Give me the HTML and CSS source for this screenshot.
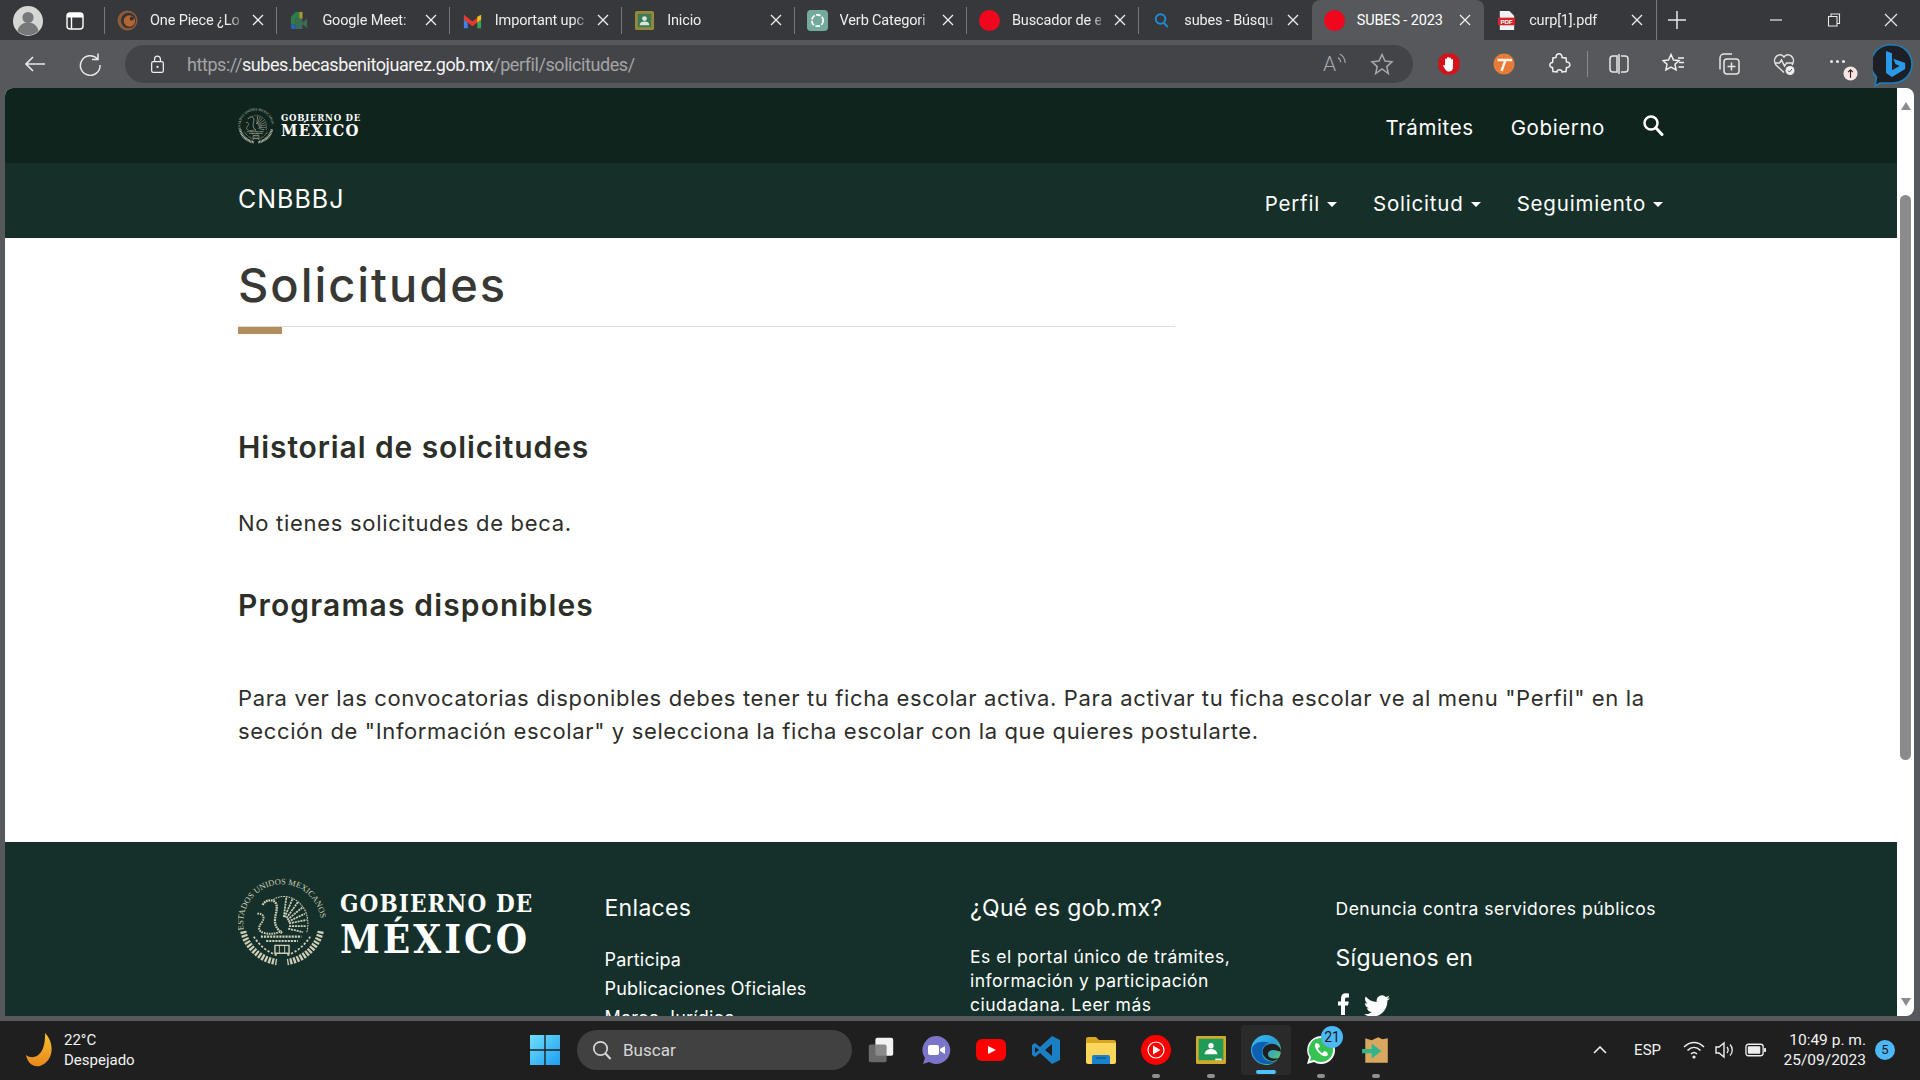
FILE: index.html
```html
<!DOCTYPE html>
<html lang="es">
<head>
<meta charset="utf-8">
<title>SUBES - 2023</title>
<link rel="stylesheet" href="styles.css">
</head>
<body>
<svg class="defs" width="0" height="0" aria-hidden="true">
  <defs>
    <symbol id="seal" viewBox="0 0 100 100">
      <path id="sealArc" d="M7 60A44 44 0 1 1 93 60" fill="none"/>
      <text class="seal-text"><textPath href="#sealArc" startOffset="1%">ESTADOS UNIDOS MEXICANOS</textPath></text>
      <g fill="none" stroke="currentColor">
        <path d="M52 44L55 21M53 44L62 23M55 45L68 27M56 47L73 33M57 49L76 40M58 51L78 47M58 54L77 54M57 57L74 61" stroke-width="2" stroke-dasharray="2.400 .9"/>
        <path d="M40 24C52 16 70 22 77 38c3 8 3 16 1 24" stroke-width="1.200" stroke-dasharray="2 1"/>
        <path d="M28 30c3-6 12-7 15-2 3 6-1 12-1 20 0 6 3 10 8 14" stroke-width="2.600" stroke-dasharray="2 .8"/>
        <path d="M22 40c7-1 9 5 5 10s-5 10 3 12 14 0 20-2" stroke-width="2.200" stroke-dasharray="1.800 1"/>
        <path d="M26 66h46M32 71h36" stroke-width="2.400" stroke-dasharray="2.400 1.100"/>
        <path d="M42 76h16v9H42Z" stroke-width="1.600"/>
        <path d="M47 76v9M53 76v9" stroke-width="1"/>
        <path d="M6 60C9 76 24 92 44 95M94 60C91 76 76 92 56 95" stroke-width="7" stroke-dasharray="2.600 1.500"/>
        <path d="M18 66c6 10 16 18 26 21M82 66c-6 10-16 18-26 21" stroke-width="2" stroke-dasharray="2.500 2"/>
      </g>
    </symbol>
    <symbol id="x" viewBox="0 0 14 14"><path d="M2 2l10 10M12 2L2 12" stroke="currentColor" stroke-width="1.300" fill="none"/></symbol>
    <symbol id="red" viewBox="0 0 20 20"><circle cx="10" cy="10" r="10" fill="#f0061d"/></symbol>
  </defs>
</svg>

<div class="window">
  <header class="tabbar">
    <div class="tabbar-lead">
      <svg class="avatar" viewBox="0 0 30 30"><circle cx="15" cy="15" r="15" fill="#d6d6d4"/><circle cx="15" cy="11.500" r="5.600" fill="#77787a"/><path d="M4.500 25c1-6 6-8.500 10.500-8.500S24.500 19 25.500 25A15 15 0 0 1 4.500 25Z" fill="#77787a"/></svg>
      <svg class="tabs-icon" viewBox="0 0 18 18"><rect x="1" y="1" width="16" height="16" rx="3" fill="none" stroke="#fff" stroke-width="1.400"/><path d="M1 5.500h16V4a3 3 0 0 0-3-3H4a3 3 0 0 0-3 3Z" fill="#fff"/><path d="M5.500 5v12" stroke="#fff" stroke-width="1.400"/></svg>
    </div>
    <div class="tab">
      <svg class="fav" viewBox="0 0 22 22"><circle cx="11" cy="11" r="10.500" fill="#8f5a36"/><circle cx="12" cy="11" r="8" fill="#33343a"/><circle cx="13" cy="11.500" r="6" fill="#b5652e"/><circle cx="15.500" cy="9" r="2.200" fill="#33343a"/></svg>
      <span class="tab-label">One Piece ¿Lo</span><svg class="tab-x"><use href="#x"/></svg>
    </div>
    <div class="tab">
      <svg class="fav" viewBox="0 0 22 22"><path d="M2 7l5-5h7v7H7v6H2Z" fill="#2f7d46"/><path d="M2 15h5v5H4a2 2 0 0 1-2-2Z" fill="#2a62b8"/><path d="M7 9h7v4l5-4v10l-5-4v5H7Z" fill="#3a6d57"/><path d="M14 2v7h-3V2Z" fill="#b8962c"/></svg>
      <span class="tab-label">Google Meet:</span><svg class="tab-x"><use href="#x"/></svg>
    </div>
    <div class="tab">
      <svg class="fav" viewBox="0 0 22 22"><path d="M2 5v14h4V10Z" fill="#3f7fe6"/><path d="M20 5v14h-4V10Z" fill="#36a35a"/><path d="M2 5l9 7 9-7v5l-9 7-9-7Z" fill="#e5392d"/><path d="M16 7l4-2v5l-4 3Z" fill="#f3bb1b"/></svg>
      <span class="tab-label">Important upc</span><svg class="tab-x"><use href="#x"/></svg>
    </div>
    <div class="tab">
      <svg class="fav" viewBox="0 0 22 22"><rect x="1" y="1" width="20" height="20" rx="2" fill="#96883a"/><rect x="4" y="4" width="14" height="14" fill="#3c7a58"/><circle cx="11" cy="9" r="2.500" fill="#d8e6dc"/><path d="M6 16c0-3 2-4 5-4s5 1 5 4Z" fill="#d8e6dc"/></svg>
      <span class="tab-label">Inicio</span><svg class="tab-x"><use href="#x"/></svg>
    </div>
    <div class="tab">
      <svg class="fav" viewBox="0 0 22 22"><rect width="22" height="22" rx="4" fill="#74aa9c"/><circle cx="11" cy="11" r="6" fill="none" stroke="#fff" stroke-width="1.800" stroke-dasharray="5 1.500"/></svg>
      <span class="tab-label">Verb Categori</span><svg class="tab-x"><use href="#x"/></svg>
    </div>
    <div class="tab">
      <svg class="fav"><use href="#red"/></svg>
      <span class="tab-label">Buscador de e</span><svg class="tab-x"><use href="#x"/></svg>
    </div>
    <div class="tab">
      <svg class="fav" viewBox="0 0 22 22"><circle cx="10" cy="9.500" r="5" fill="none" stroke="#1c8fd6" stroke-width="2"/><path d="M13.500 13.500l4 4.500" stroke="#1c8fd6" stroke-width="2"/></svg>
      <span class="tab-label">subes - Búsqu</span><svg class="tab-x"><use href="#x"/></svg>
    </div>
    <div class="tab tab-active">
      <svg class="fav"><use href="#red"/></svg>
      <span class="tab-label">SUBES - 2023</span><svg class="tab-x"><use href="#x"/></svg>
    </div>
    <div class="tab tab-plain">
      <svg class="fav" viewBox="0 0 22 22"><path d="M4 1h10l5 5v15H4Z" fill="#f2f2f2"/><rect x="2" y="8" width="18" height="8" fill="#d3262b"/><text class="pdf-text" x="11" y="14.500">PDF</text></svg>
      <span class="tab-label">curp[1].pdf</span><svg class="tab-x"><use href="#x"/></svg>
    </div>
    <svg class="plus" viewBox="0 0 20 20"><path d="M10 1v18M1 10h18" stroke="#e8e8e8" stroke-width="1.500"/></svg>
    <div class="win-controls">
      <svg viewBox="0 0 14 14"><path d="M1 7h12" stroke="#e8e8e8" stroke-width="1.200"/></svg>
      <svg viewBox="0 0 14 14"><path d="M1.500 3.500h8.500v9.500H1.500ZM4 3.500V1h8.500v9.500H10" fill="none" stroke="#e8e8e8" stroke-width="1.100"/></svg>
      <svg viewBox="0 0 14 14"><path d="M1 1l12 12M13 1L1 13" stroke="#e8e8e8" stroke-width="1.200"/></svg>
    </div>
  </header>

  <nav class="toolbar">
    <svg class="tool-lead" viewBox="0 0 24 24"><path d="M22 12H3M10 5l-7 7 7 7" fill="none" stroke="#e8e8e8" stroke-width="1.700"/></svg>
    <svg class="tool-lead" viewBox="0 0 24 24"><path d="M19.500 7A9.800 9.800 0 1 0 22 13" fill="none" stroke="#e8e8e8" stroke-width="1.500"/><path d="M20 1.500V7.500h-6" fill="none" stroke="#e8e8e8" stroke-width="1.500"/></svg>
    <div class="urlbar">
      <svg class="lock" viewBox="0 0 18 22"><rect x="2" y="8" width="14" height="13" rx="2" fill="none" stroke="#f0f0f0" stroke-width="1.500"/><path d="M5.500 8V5a3.500 3.500 0 0 1 7 0v3" fill="none" stroke="#f0f0f0" stroke-width="1.500"/><circle cx="9" cy="14.500" r="1.300" fill="#f0f0f0"/></svg>
      <div class="url"><span class="url-dim">https://</span>subes.becasbenitojuarez.gob.mx<span class="url-dim">/perfil/solicitudes/</span></div>
      <span class="read-aloud">A</span>
      <svg class="waves" viewBox="0 0 10 14"><path d="M1 5c2 1 3 3 3 5M3 1c4 2 6 5 6 10" fill="none" stroke="#a8a9ab" stroke-width="1.200"/></svg>
      <svg class="star" viewBox="0 0 24 24"><path d="M12 2.500l3 6.500 7 .8-5.200 4.800 1.500 7L12 17l-6.300 4.600 1.500-7L2 9.800 9 9Z" fill="none" stroke="#a8a9ab" stroke-width="1.500"/></svg>
    </div>
    <div class="tool-icons">
      <svg class="tool" viewBox="0 0 24 24"><path d="M7 1.500h10L22.500 7v10L17 22.500H7L1.500 17V7Z" fill="#d3121b"/><path d="M8 11V7.500a1 1 0 0 1 2 0V6a1 1 0 0 1 2 0v.5a1 1 0 0 1 2 0V8a1 1 0 0 1 2 0v7c0 3-2 4.500-4 4.500-3 0-3.500-2-6-6 .5-1 1.500-.5 2 0Z" fill="#fff"/></svg>
      <svg class="tool" viewBox="0 0 24 24"><circle cx="12" cy="12" r="11" fill="#e97b3a"/><circle cx="12" cy="12" r="11" fill="none" stroke="#3f5a55" stroke-width=".8"/><path d="M5.500 8h14.500M13.500 8L9.500 19" stroke="#fff3e4" stroke-width="2.400" fill="none"/></svg>
      <svg class="tool" viewBox="0 0 24 24"><path d="M9 5.500c-.5-5 6.500-5 6 0l4 .5.500 4c4.500-.5 4.500 6 0 5.500l-.5 4-4 .5c.5-3-5.500-3-5 0l-4-.5-.5-4c-3.500.5-3.500-5.500 0-5l.5-4.500Z" fill="none" stroke="#f2f2f2" stroke-width="1.500"/></svg>
      <span class="tool-sep"></span>
      <svg class="tool" viewBox="0 0 24 24"><path d="M10 4H6a3 3 0 0 0-3 3v10a3 3 0 0 0 3 3h4ZM12 2v20M14 4h4a3 3 0 0 1 3 3v10a3 3 0 0 1-3 3h-4" fill="none" stroke="#e6e6e6" stroke-width="1.500"/></svg>
      <svg class="tool" viewBox="0 0 24 24"><path d="M9 2.500l2.500 5.500 5.500.6-4 3.700 1.100 5.600L9 15.200l-5.100 2.700L5 12.300 1 8.600 6.500 8ZM16 6h6M17 10.500h5M16.500 15h5.500" fill="none" stroke="#f2f2f2" stroke-width="1.500"/></svg>
      <svg class="tool" viewBox="0 0 24 24"><rect x="7" y="7" width="15" height="15" rx="3" fill="none" stroke="#e6e6e6" stroke-width="1.500"/><path d="M3 17.500V6a4 4 0 0 1 4-4h8M14.500 10.500v8M10.500 14.500h8" fill="none" stroke="#e6e6e6" stroke-width="1.500"/></svg>
      <svg class="tool" viewBox="0 0 24 24"><path d="M12 20.500L4 13C-1 6 8-1 12 5c4-6 13 1 8 8M2.500 11h5l2-3 3 6 2-3h6" fill="none" stroke="#e6e6e6" stroke-width="1.400"/><circle cx="18" cy="18.500" r="4.500" fill="#efefef"/><path d="M16 18.500l1.500 1.500 2.500-3" fill="none" stroke="#57585b" stroke-width="1"/></svg>
      <div class="tool-more">
        <span class="dots"><i></i><i></i><i></i></span>
        <svg class="more-badge" viewBox="0 0 16 16"><circle cx="8" cy="8" r="7.500" fill="#f8e4e2"/><path d="M8 12.500V4M5.500 6.500L8 4l2.500 2.500" fill="none" stroke="#222" stroke-width="1.200"/></svg>
      </div>
      <svg class="tool bing" viewBox="0 0 40 43"><path d="M20 1a19 19 0 0 1 0 38H7l-5 3 1.500-9A19 19 0 0 1 20 1Z" fill="#1c1f26" stroke="#1d7fb8" stroke-width="1.600"/><path d="M13 7l6 2.200v17l7.500-4.200-4-2-2.300-5.300 12 4.200v6l-13.200 8L13 29Z" fill="#2a9ae6"/></svg>
    </div>
  </nav>

  <div class="viewport">
    <div class="page">
      <div class="nav-top">
        <div class="brand-small">
          <svg class="seal-small"><use href="#seal"/></svg>
          <div class="brand-words"><span class="bs-1">GOBIERNO DE</span><span class="bs-2">MÉXICO</span></div>
        </div>
        <div class="nav-top-links">
          <a>Trámites</a><a>Gobierno</a>
          <svg class="nav-search" viewBox="0 0 22 22"><circle cx="9" cy="9" r="6.500" fill="none" stroke="#fff" stroke-width="2.500"/><path d="M14 14l6 6.500" stroke="#fff" stroke-width="3" stroke-linecap="round"/></svg>
        </div>
      </div>
      <div class="nav-sub">
        <span class="site-name">CNBBBJ</span>
        <div class="nav-sub-links">
          <a>Perfil<i class="caret"></i></a><a>Solicitud<i class="caret"></i></a><a>Seguimiento<i class="caret"></i></a>
        </div>
      </div>
      <main class="content">
        <h1 class="title">Solicitudes</h1>
        <h2 class="h-hist">Historial de solicitudes</h2>
        <p class="p-none">No tienes solicitudes de beca.</p>
        <h2 class="h-prog">Programas disponibles</h2>
        <p class="p-long">Para ver las convocatorias disponibles debes tener tu ficha escolar activa. Para activar tu ficha escolar ve al menu "Perfil" en la sección de "Información escolar" y selecciona la ficha escolar con la que quieres postularte.</p>
      </main>
      <footer class="footer">
        <div class="brand-large">
          <svg class="seal-large"><use href="#seal"/></svg>
          <div class="brand-words"><span class="bl-1">GOBIERNO DE</span><span class="bl-2">MÉXICO</span></div>
        </div>
        <div class="f-col">
          <h3>Enlaces</h3>
          <ul class="f-links"><li>Participa</li><li>Publicaciones Oficiales</li><li>Marco Jurídico</li></ul>
        </div>
        <div class="f-col">
          <h3>¿Qué es gob.mx?</h3>
          <p class="f-text">Es el portal único de trámites, información y participación ciudadana. Leer más</p>
        </div>
        <div class="f-col">
          <div class="f-report">Denuncia contra servidores públicos</div>
          <h3 class="f-follow">Síguenos en</h3>
          <div class="f-social">
            <svg class="so-f" viewBox="5 1 14 22"><path d="M14 13.500h3l.8-4H14v-2c0-1 .3-2 2-2h2V1.500c-.4 0-1.800-.3-3.200-.3C11.900 1.200 10 3 10 6.700v2.800H7v4h3V24h4Z" fill="#fff"/></svg>
            <svg class="so-t" viewBox="0 0 24 24"><path d="M23.953 4.570a10 10 0 01-2.825.775 4.958 4.958 0 002.163-2.723c-.951.555-2.005.959-3.127 1.184a4.920 4.920 0 00-8.384 4.482C7.690 8.095 4.067 6.130 1.640 3.162a4.822 4.822 0 00-.666 2.475c0 1.710.870 3.213 2.188 4.096a4.904 4.904 0 01-2.228-.616v.060a4.923 4.923 0 003.946 4.827 4.996 4.996 0 01-2.212.085 4.936 4.936 0 004.604 3.417 9.867 9.867 0 01-6.102 2.105c-.390 0-.779-.023-1.170-.067a13.995 13.995 0 007.557 2.209c9.053 0 13.998-7.496 13.998-13.985 0-.210 0-.420-.015-.630A9.935 9.935 0 0024 4.590z" fill="#fff"/></svg>
          </div>
        </div>
      </footer>
    </div>
    <div class="scrollbar">
      <i class="arrow-up"></i>
      <div class="thumb"></div>
      <i class="arrow-down"></i>
    </div>
  </div>

  <footer class="taskbar">
    <div class="weather">
      <svg class="moon" viewBox="0 0 28 34"><defs><linearGradient id="moonG" x1="0" y1="0" x2="0" y2="1"><stop offset="0" stop-color="#f8c12c"/><stop offset="1" stop-color="#e8871e"/></linearGradient></defs><path d="M19 0C29 10 28 28 14 33 6 35 1 28 0 22c8 6 20 0 19-22Z" fill="url(#moonG)"/></svg>
      <div class="weather-text"><span>22°C</span><span>Despejado</span></div>
    </div>
    <div class="task-center">
      <svg class="start" viewBox="0 0 30 30"><defs><linearGradient id="winG" x1="0" y1="0" x2="1" y2="1"><stop offset="0" stop-color="#6fe0fb"/><stop offset="1" stop-color="#1d9df0"/></linearGradient></defs><path d="M0 0h14.300v14.300H0ZM15.700 0H30v14.300H15.700ZM0 15.700h14.300V30H0ZM15.700 15.700H30V30H15.700Z" fill="url(#winG)"/></svg>
      <div class="search">
        <svg class="search-ic" viewBox="0 0 20 20"><circle cx="8.500" cy="8.500" r="6.700" fill="none" stroke="#d8d8d8" stroke-width="1.700"/><path d="M13.500 13.500l5 5.500" stroke="#d8d8d8" stroke-width="2"/></svg>
        <span>Buscar</span>
      </div>
      <div class="apps">
        <div class="app"><svg viewBox="0 0 32 32"><rect x="10" y="3" width="19" height="19" rx="2" fill="#f2f2f2"/><rect x="3" y="10" width="19" height="19" rx="2" fill="#77787a" opacity=".85"/></svg></div>
        <div class="app"><svg viewBox="0 0 30 30"><path d="M15 1a14 14 0 1 1-7 26l-6 2 2-6A14 14 0 0 1 15 1Z" fill="#7b75c9"/><rect x="7" y="10" width="11" height="10" rx="2" fill="#fff"/><path d="M19 14l5-3v8l-5-3Z" fill="#fff"/></svg></div>
        <div class="app"><svg viewBox="0 0 30 22"><rect width="30" height="22" rx="6" fill="#f00"/><path d="M12 7l8 4-8 4Z" fill="#fff"/></svg></div>
        <div class="app"><svg viewBox="0 0 30 30"><path d="M21 1l8 4v20l-8 4-12-11-5 4-3-2v-10l3-2 5 4Z" fill="#1b7fc6"/><path d="M21 9l-7 6 7 6Z" fill="#1f1f1f"/><path d="M4 12l4 3-4 3Z" fill="#1f1f1f"/></svg></div>
        <div class="app"><svg viewBox="0 0 30 28"><path d="M0 3a2 2 0 0 1 2-2h8l3 3h15a2 2 0 0 1 2 2v4H0Z" fill="#d9a520"/><path d="M0 7h30v19a2 2 0 0 1-2 2H2a2 2 0 0 1-2-2Z" fill="#fbd65c"/><path d="M6 28v-7a2 2 0 0 1 2-2h14a2 2 0 0 1 2 2v7Z" fill="#1a82c8"/><path d="M10 22h10" stroke="#0e5c92" stroke-width="1.500"/></svg></div>
        <div class="app"><svg viewBox="0 0 30 30"><circle cx="15" cy="15" r="15" fill="#f00"/><circle cx="15" cy="15" r="8" fill="none" stroke="#fff" stroke-width="1.200"/><path d="M12 10.500l7.500 4.500-7.500 4.500Z" fill="#fff"/></svg><i class="dot"></i></div>
        <div class="app"><svg viewBox="0 0 28 26"><rect width="28" height="26" rx="1" fill="#cfa92a"/><rect x="2.500" y="2.500" width="23" height="20" fill="#1f9a57"/><circle cx="14" cy="9" r="2.500" fill="#fff"/><path d="M8 17c0-3 3-5 6-5s6 2 6 5Z" fill="#fff"/><rect x="18" y="21" width="6" height="1.600" fill="#fff"/></svg><i class="dot"></i></div>
        <div class="app app-active"><svg viewBox="0 0 30 30"><defs><linearGradient id="edgeG" x1="0" y1="0" x2="1" y2="1"><stop offset="0" stop-color="#35c1f1"/><stop offset=".5" stop-color="#2b9bd8"/><stop offset="1" stop-color="#6bd34e"/></linearGradient></defs><circle cx="15" cy="15" r="15" fill="url(#edgeG)"/><path d="M30 17c0-6-6-9-11-8-7 1-9 8-6 12 3 5 10 7 15 2-4 1-11 1-11-4 0-2 2-4 5-4s6 1 8 2Z" fill="#1f1f1f"/><path d="M1 14c0 8 6 16 16 15 3 0 6-1 8-3-8 2-14-2-14-9 0-5 4-9 8-9-9-3-17 0-18 6Z" fill="#0f5fb0"/></svg><i class="dash"></i></div>
        <div class="app"><svg viewBox="0 0 30 30"><path d="M15 1a14 14 0 0 1 0 28c-3 0-5-1-7-2l-7 2 2-7A14 14 0 0 1 15 1Z" fill="#fff"/><path d="M15 3a12 12 0 0 1 0 24c-3 0-5-1-7-2l-4 1 1-4A12 12 0 0 1 15 3Z" fill="#37c354"/><path d="M10 8c-2 2-1 6 3 10s7 4 9 2l-1-3-3-1-1 2c-2 0-5-3-5-5l2-1-1-3Z" fill="#fff"/></svg><b class="wa-badge">21</b><i class="dot"></i></div>
        <div class="app"><svg viewBox="0 0 26 28"><path d="M3 3l6 2 6-3 4 2 5-1v23H3Z" fill="#d9a860"/><path d="M0 13h9V8l9 7-9 7v-5H0Z" fill="#2fb58a"/></svg><i class="dot"></i></div>
      </div>
    </div>
    <div class="tray">
      <svg class="tray-chev" viewBox="0 0 14 8"><path d="M1 7l6-6 6 6" fill="none" stroke="#eee" stroke-width="1.600"/></svg>
      <span class="tray-lang">ESP</span>
      <svg class="tray-wifi" viewBox="0 0 22 18"><path d="M1 6c6-6 14-6 20 0M4.500 9.500c4-4 9-4 13 0M8 13c2-2 4-2 6 0" fill="none" stroke="#eee" stroke-width="1.600"/><circle cx="11" cy="16" r="1.600" fill="#eee"/></svg>
      <svg class="tray-vol" viewBox="0 0 20 18"><path d="M1 6h3l5-4v14l-5-4H1Z" fill="none" stroke="#eee" stroke-width="1.400"/><path d="M12 6c1.500 2 1.500 4 0 6M15 3.500c3 3 3 8 0 11" fill="none" stroke="#eee" stroke-width="1.300"/></svg>
      <svg class="tray-bat" viewBox="0 0 22 14"><rect x="1" y="1" width="18" height="12" rx="2.500" fill="none" stroke="#eee" stroke-width="1.400"/><rect x="3" y="3" width="13" height="8" rx="1" fill="#eee"/><rect x="20" y="5" width="2" height="4" fill="#eee"/></svg>
      <div class="clock"><span>10:49 p. m.</span><span>25/09/2023</span></div>
      <b class="notif">5</b>
    </div>
  </footer>
</div>
</body>
</html>
```
FILE: styles.css
```css
* { box-sizing: border-box; }
html, body { margin: 0; height: 100%; overflow: hidden; }
body { background: #57585b; font-family: "Inter", "Noto Sans", sans-serif; }
.defs { position: absolute; }
h1, h2, h3, p, ul { margin: 0; padding: 0; font-weight: inherit; font-size: inherit; }
ul { list-style: none; }
i { display: block; }

.window { width: 1920px; height: 1080px; display: flex; flex-direction: column; overflow: hidden; background: #57585b; }

/* tab strip */
.tabbar { height: 40px; flex: none; background: #37383c; display: flex; align-items: stretch; font-family: "Roboto", "Noto Sans", sans-serif; }
.tabbar-lead { width: 105px; flex: none; display: flex; align-items: center; padding-left: 13px; gap: 23px; border-right: 1px solid #77787a; margin: 7px 0 6px; }
.avatar { width: 30px; height: 30px; flex: none; }
.tabs-icon { width: 18px; height: 18px; flex: none; }
.tab { width: 172.4px; flex: none; display: flex; align-items: center; padding: 0 12px; gap: 12px; color: #eeeeee; font-size: 14.500px; letter-spacing: -.15px; position: relative; }
.tab::after { content: ""; position: absolute; right: 0; top: 7px; bottom: 6px; width: 1px; background: #77787a; }
.tab-active { background: #57585b; border-radius: 8px 8px 0 0; color: #fff; }
.tab-active::after, .tab-plain::after { display: none; }
.tab:nth-child(8)::after { display: none; }
.fav { width: 21px; height: 21px; flex: none; }
.tab-label { flex: 1; min-width: 0; white-space: nowrap; -webkit-mask-image: linear-gradient(90deg, #000 88%, transparent 108%); mask-image: linear-gradient(90deg, #000 88%, transparent 108%); }
.tab-active .tab-label { -webkit-mask-image: none; mask-image: none; }
.tab-x { width: 14px; height: 14px; flex: none; color: #efefef; }
.pdf-text { font: 700 6.500px "Liberation Sans", sans-serif; fill: #fff; text-anchor: middle; }
.plus { width: 20px; height: 20px; margin: 10px 0 0 10px; flex: none; }
.tab-plain { border-right: 1px solid #77787a; background-clip: padding-box; margin: 0; }
.win-controls { margin-left: auto; display: flex; align-items: center; gap: 43.500px; padding-right: 22px; }
.win-controls svg { width: 14px; height: 14px; }

/* address row */
.toolbar { height: 48px; flex: none; display: flex; align-items: center; padding: 0 8px 0 23px; }
.tool-lead { width: 24px; height: 24px; flex: none; margin-right: 31px; }
.toolbar .tool-lead:nth-child(2) { margin-right: 23px; }
.urlbar { width: 1288px; height: 38px; flex: none; border-radius: 19px; background: #434448; display: flex; align-items: center; padding: 0 19px 0 25px; font-family: "Roboto", "Noto Sans", sans-serif; }
.lock { width: 15px; height: 20px; flex: none; margin-right: 22px; }
.url { flex: 1; font-size: 18px; color: #f4f4f4; white-space: nowrap; letter-spacing: -0.43px; }
.url-dim { color: #a3a4a6; }
.read-aloud { color: #a8a9ab; font-size: 21px; font-weight: 300; line-height: 24px; }
.waves { width: 9px; height: 13px; margin: -10px 24px 0 1px; flex: none; }
.star { width: 24px; height: 24px; flex: none; }
.tool-icons { flex: 1; display: flex; align-items: center; padding-left: 24px; gap: 31px; }
.tool { width: 24px; height: 24px; flex: none; }
.tool-sep { width: 1px; height: 26px; background: #8a8b8d; margin: 0 -12px 0 -15px; }
.tool-more { width: 24px; height: 24px; flex: none; position: relative; }
.dots { display: flex; gap: 3px; padding: 8px 0 0 3px; }
.dots i { width: 3px; height: 3px; border-radius: 50%; background: #eee; }
.more-badge { position: absolute; right: -7px; bottom: -5px; width: 15px; height: 15px; }
.bing { width: 40px; height: 43px; margin: 0 0 -3px -9px; }

/* web page */
.viewport { flex: 1; min-height: 0; display: flex; padding: 0 6px 0 5px; }
.page { width: 1892px; flex: none; overflow: hidden; background: #fff; border-radius: 8px 0 0 0; }
.scrollbar { width: 17px; flex: none; background: #fff; border-radius: 0 8px 8px 0; display: flex; flex-direction: column; align-items: center; padding: 14px 3px 10px 3px; }
.arrow-up { width: 0; height: 0; border: 5px solid transparent; border-top: 0; border-bottom: 8px solid #8b8b8b; }
.arrow-down { width: 0; height: 0; border: 5px solid transparent; border-bottom: 0; border-top: 8px solid #8b8b8b; margin-top: auto; }
.thumb { width: 11px; height: 565px; background: #8b8b8b; border-radius: 6px; margin-top: 85px; }

.nav-top { height: 75px; background: #0f241d; padding: 0 233px; display: flex; justify-content: space-between; align-items: center; color: #fff; }
.brand-small, .brand-large { display: flex; align-items: center; color: #fff; }
.brand-words { display: flex; flex-direction: column; font-family: "DejaVu Serif Condensed", "DejaVu Serif", serif; font-stretch: condensed; font-weight: 700; white-space: nowrap; }
.seal-small { width: 36px; height: 36px; margin-right: 7px; color: #c9c9b6; }
.bs-1 { font-size: 9.500px; line-height: 10px; letter-spacing: .75px; }
.bs-2 { font-size: 16.500px; line-height: 16px; letter-spacing: 1.300px; }
.seal-text { font: 400 9.600px "Liberation Serif", serif; fill: currentColor; }
.nav-top-links { display: flex; align-items: center; font-size: 20.500px; gap: 37px; letter-spacing: .6px; padding-top: 3px; }
.nav-search { width: 22px; height: 22px; margin: -5px 0 0 0; }
.nav-sub { height: 75px; background: #163029; padding: 0 233px; display: flex; justify-content: space-between; align-items: center; color: #fff; }
.site-name { font-size: 25px; margin-top: -3px; letter-spacing: 1px; }
.nav-sub-links { display: flex; align-items: center; font-size: 20.500px; gap: 36px; margin-top: 5px; letter-spacing: .8px; margin-right: 1px; }
.nav-sub-links a { display: flex; align-items: center; }
.caret { width: 0; height: 0; border: 5px solid transparent; border-top: 5px solid #fff; border-bottom: 0; margin-left: 7px; margin-top: 3px; }

.content { height: 604px; padding: 0 233px; color: #2e2e2a; }
.title { width: 937px; padding: 18px 0 12px; font-size: 47px; line-height: 58px; font-weight: 500; color: #383835; border-bottom: 1px solid #ddd; position: relative; letter-spacing: 1.950px; }
.title::after { content: ""; position: absolute; left: 0; bottom: -8px; width: 44px; height: 7px; background: #b38e5d; }
.content h2 { font-size: 30px; line-height: 36px; font-weight: 600; color: #2c2e28; letter-spacing: .9px; }
.h-hist { margin-top: 102px; }
.p-none { margin-top: 42px; font-size: 22px; line-height: 33px; letter-spacing: .7px; }
.content .h-prog { margin-top: 47px; letter-spacing: 1.150px; }
.p-long { margin-top: 59px; font-size: 22px; line-height: 33px; letter-spacing: .64px; }

.footer { height: 174px; background: #15302a; padding: 36px 233px 0; display: grid; grid-template-columns: repeat(4, 1fr); column-gap: 36px; color: #fff; overflow: hidden; align-items: start; }
.seal-large { width: 88px; height: 89px; margin-right: 14px; color: #cfcfb8; flex: none; }
.brand-large { align-items: flex-start; }
.brand-large .brand-words { margin-top: 12px; }
.bl-1 { font-size: 24px; line-height: 28px; letter-spacing: 1.100px; }
.bl-2 { font-size: 40px; line-height: 42px; letter-spacing: 3px; }
.f-col { margin: 15px 0 0 1px; min-width: 0; }
.f-col h3 { font-size: 23px; line-height: 30px; font-weight: 400; letter-spacing: .3px; }
.f-links { margin-top: 22px; font-size: 18px; line-height: 29px; letter-spacing: .2px; }
.f-text { margin-top: 22px; font-size: 17.500px; line-height: 24px; width: 300px; letter-spacing: .5px; }
.f-report { margin-top: 4px; font-size: 17.500px; line-height: 24px; white-space: nowrap; letter-spacing: .5px; }
.f-col .f-follow { margin-top: 22px; }
.f-social { margin-top: 20px; display: flex; gap: 12px; }
.so-f { width: 14px; height: 22px; }
.so-t { width: 30px; height: 26px; }

/* taskbar */
.taskbar { height: 59px; flex: none; margin-top: 5px; padding-bottom: 1px; background: #1f1f1f; display: flex; align-items: center; color: #f2f2f2; font-family: "Roboto", "Noto Sans", sans-serif; }
.weather { width: 530px; flex: none; display: flex; align-items: center; padding-left: 26px; gap: 10px; font-size: 15px; line-height: 20px; }
.moon { width: 28px; height: 34px; flex: none; }
.weather-text { display: flex; flex-direction: column; }
.task-center { display: flex; align-items: center; }
.start { width: 30px; height: 30px; flex: none; margin-right: 17px; }
.search { width: 275px; height: 40px; flex: none; border-radius: 20px; background: #414141; display: flex; align-items: center; padding-left: 15px; gap: 11px; font-size: 17px; color: #d8d8d8; }
.search-ic { width: 20px; height: 20px; }
.apps { display: flex; align-items: center; margin-left: 4px; }
.app { width: 50px; height: 50px; margin-right: 5px; flex: none; display: flex; align-items: center; justify-content: center; position: relative; border-radius: 4px; }
.app svg { width: 30px; height: 30px; }
.app-active { background: #2a2a2a; }
.dot { position: absolute; bottom: -3px; left: 21px; width: 8px; height: 4px; border-radius: 2px; background: #8f8f8f; }
.dash { position: absolute; bottom: 1px; left: 15px; width: 20px; height: 4px; border-radius: 2px; background: #4cc2ff; }
.wa-badge { position: absolute; top: 1px; right: 3px; width: 22px; height: 22px; border-radius: 50%; background: #4cb8f5; color: #1a1a1a; font-size: 14px; font-weight: 400; line-height: 22px; text-align: center; }
.tray { margin-left: auto; display: flex; align-items: center; padding-right: 25px; font-size: 15px; }
.tray-chev { width: 14px; height: 8px; margin-right: 27.500px; }
.tray-lang { margin-right: 22px; font-size: 15px; }
.tray-wifi { width: 22px; height: 18px; margin-right: 10px; }
.tray-vol { width: 20px; height: 18px; margin-right: 9.500px; }
.tray-bat { width: 21px; height: 14px; margin-right: 18px; }
.clock { display: flex; flex-direction: column; align-items: flex-end; line-height: 20px; font-size: 15.500px; margin-right: 9px; }
.notif { width: 20px; height: 20px; border-radius: 50%; background: #4cb8f5; color: #1a1a1a; font-size: 13px; font-weight: 400; line-height: 20px; text-align: center; }
```
